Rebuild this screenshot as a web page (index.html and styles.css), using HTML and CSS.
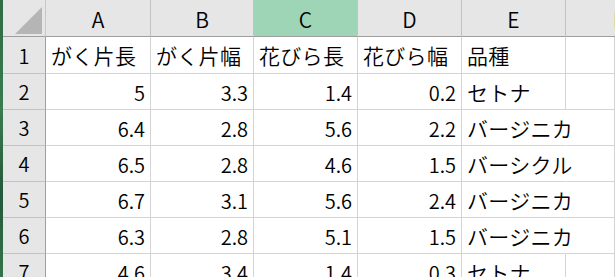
FILE: index.html
```html
<!DOCTYPE html>
<html lang="ja">
<head>
<meta charset="utf-8">
<title>Sheet</title>
<link rel="stylesheet" href="styles.css">
</head>
<body>
<div class="sheet">
  <div class="strip"></div>
  <div class="grid">
    <div class="corner">
      <svg width="42" height="36" viewBox="0 0 42 36"><polygon points="12,34 39,34 39,7" fill="#b5b5b5"/></svg>
    </div>
    <div class="colh">A</div>
    <div class="colh">B</div>
    <div class="colh sel">C</div>
    <div class="colh">D</div>
    <div class="colh">E</div>
    <div class="colh last">F</div>

    <div class="rowh">1</div>
    <div class="cell">がく片長</div>
    <div class="cell">がく片幅</div>
    <div class="cell">花びら長</div>
    <div class="cell">花びら幅</div>
    <div class="cell">品種</div>
    <div class="cell"></div>

    <div class="rowh">2</div>
    <div class="cell num">5</div>
    <div class="cell num">3.3</div>
    <div class="cell num">1.4</div>
    <div class="cell num">0.2</div>
    <div class="cell">セトナ</div>
    <div class="cell"></div>

    <div class="rowh">3</div>
    <div class="cell num">6.4</div>
    <div class="cell num">2.8</div>
    <div class="cell num">5.6</div>
    <div class="cell num">2.2</div>
    <div class="cell spill">バージニカ</div>
    <div class="cell"></div>

    <div class="rowh">4</div>
    <div class="cell num">6.5</div>
    <div class="cell num">2.8</div>
    <div class="cell num">4.6</div>
    <div class="cell num">1.5</div>
    <div class="cell spill">バーシクル</div>
    <div class="cell"></div>

    <div class="rowh">5</div>
    <div class="cell num">6.7</div>
    <div class="cell num">3.1</div>
    <div class="cell num">5.6</div>
    <div class="cell num">2.4</div>
    <div class="cell spill">バージニカ</div>
    <div class="cell"></div>

    <div class="rowh">6</div>
    <div class="cell num">6.3</div>
    <div class="cell num">2.8</div>
    <div class="cell num">5.1</div>
    <div class="cell num">1.5</div>
    <div class="cell spill">バージニカ</div>
    <div class="cell"></div>

    <div class="rowh">7</div>
    <div class="cell num">4.6</div>
    <div class="cell num">3.4</div>
    <div class="cell num">1.4</div>
    <div class="cell num">0.3</div>
    <div class="cell">セトナ</div>
    <div class="cell"></div>
  </div>
</div>
</body>
</html>
```

FILE: styles.css
```css
html, body {
  margin: 0;
  padding: 0;
  background: #ffffff;
  overflow: hidden;
}

body {
  font-family: "Noto Sans CJK JP", "Noto Sans", sans-serif;
  font-size: 20px;
  font-weight: 350;
  color: #000;
}

.sheet {
  display: flex;
  height: 277px;
  width: 615px;
}

.strip {
  width: 3px;
  flex: none;
  background: linear-gradient(180deg, #2f6d45 0%, #3a7b50 40%, #24583a 70%, #35744a 100%);
}

.grid {
  flex: 1;
  display: grid;
  grid-template-columns: 43px 105px 103px 104px 104px 104px 1fr;
  grid-template-rows: 37px 37px repeat(6, 36px);
}

.grid > div {
  box-sizing: border-box;
  display: flex;
  align-items: center;
  white-space: nowrap;
  min-width: 0;
}

.corner {
  background: #e6e6e6;
  border-right: 1px solid #c8c8c8;
  border-bottom: 1px solid #9e9e9e;
}

.corner svg {
  display: block;
}

.colh {
  background: #e6e6e6;
  justify-content: center;
  border-right: 1px solid #c2c2c2;
  border-bottom: 1px solid #9e9e9e;
  padding-top: 1px;
  font-size: 21px;
}

.colh.sel {
  background: #9fd5b7;
}

.colh.last {
  justify-content: flex-start;
  padding-left: 47px;
  border-right: none;
}

.rowh {
  background: #e6e6e6;
  justify-content: center;
  border-right: 1px solid #9e9e9e;
  border-bottom: 1px solid #c2c2c2;
}

.cell {
  border-right: 1px solid #d4d4d4;
  border-bottom: 1px solid #d4d4d4;
  padding: 0 5px 0 5px;
  overflow: visible;
  font-size: 21px;
  letter-spacing: 0.3px;
}

.cell.num {
  justify-content: flex-end;
  font-size: 20px;
  letter-spacing: 0;
  padding-top: 2px;
}

.cell.spill {
  border-right-color: #ffffff;
}
```
